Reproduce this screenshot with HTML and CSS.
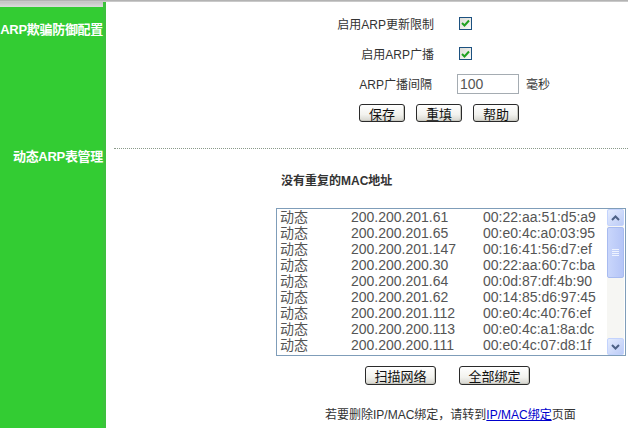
FILE: index.html
```html
<!DOCTYPE html>
<html>
<head>
<meta charset="utf-8">
<link rel="stylesheet" href="styles.css">
</head>
<body>
<div class="topline"></div>
<div class="page">
  <aside class="side">
    <div class="side-cap"></div>
    <div class="side-item first">ARP欺骗防御配置</div>
    <div class="side-item second">动态ARP表管理</div>
  </aside>
  <main class="main">
    <section class="cfg">
      <div class="row r1">
        <span class="lbl">启用ARP更新限制</span>
        <span class="ctl"><span class="chk"><svg width="9" height="8" viewBox="0 0 9 8"><path d="M1 4 L3.5 6.5 L8 1.5" fill="none" stroke="#21a121" stroke-width="2"/></svg></span></span>
      </div>
      <div class="row r2">
        <span class="lbl">启用ARP广播</span>
        <span class="ctl"><span class="chk"><svg width="9" height="8" viewBox="0 0 9 8"><path d="M1 4 L3.5 6.5 L8 1.5" fill="none" stroke="#21a121" stroke-width="2"/></svg></span></span>
      </div>
      <div class="row r3">
        <span class="lbl">ARP广播间隔</span>
        <span class="ctl"><span class="inp">100</span><span class="unit">毫秒</span></span>
      </div>
      <div class="btns top-btns">
        <span class="btn">保存</span>
        <span class="btn">重填</span>
        <span class="btn">帮助</span>
      </div>
    </section>
    <div class="dots"></div>
    <section class="arp">
      <div class="title">没有重复的MAC地址</div>
      <div class="list">
        <div class="rows">
          <div class="it"><span class="c1">动态</span><span class="c2">200.200.201.61</span><span class="c3">00:22:aa:51:d5:a9</span></div>
          <div class="it"><span class="c1">动态</span><span class="c2">200.200.201.65</span><span class="c3">00:e0:4c:a0:03:95</span></div>
          <div class="it"><span class="c1">动态</span><span class="c2">200.200.201.147</span><span class="c3">00:16:41:56:d7:ef</span></div>
          <div class="it"><span class="c1">动态</span><span class="c2">200.200.200.30</span><span class="c3">00:22:aa:60:7c:ba</span></div>
          <div class="it"><span class="c1">动态</span><span class="c2">200.200.201.64</span><span class="c3">00:0d:87:df:4b:90</span></div>
          <div class="it"><span class="c1">动态</span><span class="c2">200.200.201.62</span><span class="c3">00:14:85:d6:97:45</span></div>
          <div class="it"><span class="c1">动态</span><span class="c2">200.200.201.112</span><span class="c3">00:e0:4c:40:76:ef</span></div>
          <div class="it"><span class="c1">动态</span><span class="c2">200.200.200.113</span><span class="c3">00:e0:4c:a1:8a:dc</span></div>
          <div class="it"><span class="c1">动态</span><span class="c2">200.200.200.111</span><span class="c3">00:e0:4c:07:d8:1f</span></div>
        </div>
        <div class="sb">
          <div class="sbtn"><svg width="9" height="6" viewBox="0 0 9 6"><path d="M1 5 L4.5 1.5 L8 5" fill="none" stroke="#4d6185" stroke-width="2"/></svg></div>
          <div class="thumb"><span></span><span></span><span></span><span></span></div>
          <div class="track"></div>
          <div class="sbtn"><svg width="9" height="6" viewBox="0 0 9 6"><path d="M1 1 L4.5 4.5 L8 1" fill="none" stroke="#4d6185" stroke-width="2"/></svg></div>
        </div>
      </div>
      <div class="btns low-btns">
        <span class="btn wide">扫描网络</span>
        <span class="btn wide">全部绑定</span>
      </div>
      <p class="note">若要删除IP/MAC绑定，请转到<a href="#" class="link">IP/MAC绑定</a>页面</p>
    </section>
  </main>
</div>
</body>
</html>
```
FILE: styles.css
```css
html, body {
  margin: 0;
  padding: 0;
  background: #fff;
  height: 428px;
  overflow: hidden;
}
body {
  font-family: "Liberation Sans", "Noto Sans CJK SC", sans-serif;
  font-size: 12px;
  color: #222;
}
.topline {
  height: 2px;
  background: linear-gradient(#a8a8a8, #d4d4d4);
}
.page {
  display: flex;
  height: 426px;
}
.side {
  width: 103px;
  background: #33cc33;
  border-right: 3px solid #3cc23c;
  display: flex;
  flex-direction: column;
  align-items: flex-end;
}
.side-cap {
  align-self: stretch;
  height: 5px;
  background: linear-gradient(#c4c4c4, #dcdcdc);
}
.side-item {
  color: #fff;
  font-weight: bold;
  font-size: 13px;
  line-height: 16px;
  letter-spacing: -0.3px;
  white-space: nowrap;
}
.side-item.first { margin-top: 15px; }
.side-item.second { margin-top: 111px; }

.main {
  flex: 1;
  display: flex;
  flex-direction: column;
}
.cfg {
  padding-top: 6px;
}
.row {
  display: grid;
  grid-template-columns: 328px 1fr;
  column-gap: 25px;
  align-items: center;
}
.r1 { height: 30px; }
.r2 { height: 31px; }
.r3 { height: 29px; }
.lbl {
  text-align: right;
  color: #333;
}
.r3 .lbl { padding-right: 2px; }
.ctl {
  display: flex;
  align-items: center;
}
.chk {
  width: 11px;
  height: 11px;
  border: 1px solid #1c5180;
  background: linear-gradient(135deg, #dcdcd7, #fafaf8);
  display: flex;
  align-items: center;
  justify-content: center;
}
.inp {
  box-sizing: border-box;
  width: 62px;
  height: 20px;
  border: 1px solid #a5acb2;
  font-size: 14px;
  line-height: 18px;
  padding-left: 2px;
  color: #555;
  margin-left: -2px;
}
.unit {
  margin-left: 7px;
  color: #333;
}
.btns {
  display: flex;
}
.top-btns {
  margin-top: 6px;
  padding-left: 253px;
  gap: 11px;
}
.btn {
  box-sizing: border-box;
  width: 46px;
  height: 18px;
  border: 1px solid #2a2a2a;
  border-radius: 3px;
  background: linear-gradient(#ffffff, #f2f2ee 60%, #d6d5ce);
  display: flex;
  align-items: center;
  justify-content: center;
  font-size: 13px;
  color: #111;
  box-shadow: inset -1px -1px 0 #c8c8c0;
}
.dots {
  margin: 26px 0 0 8px;
  border-top: 1px dotted #8a9a8a;
}
.arp {
  padding-left: 170px;
}
.title {
  margin: 26px 0 0 5px;
  font-weight: bold;
  color: #333;
  line-height: 12px;
}
.list {
  margin-top: 21px;
  box-sizing: border-box;
  width: 350px;
  height: 148px;
  border: 1px solid #7f9db9;
  display: flex;
}
.rows {
  flex: 1;
  padding-left: 3px;
  overflow: hidden;
}
.it {
  height: 16px;
  line-height: 16px;
  font-size: 14px;
  color: #555;
  white-space: nowrap;
  display: flex;
}
.c1 { width: 71px; }
.c2 { width: 132px; }
.sb {
  width: 17px;
  margin-right: 1px;
  display: flex;
  flex-direction: column;
  background: #f6f6f3;
}
.sbtn {
  height: 17px;
  box-sizing: border-box;
  border: 1px solid #c3d3fd;
  border-radius: 2px;
  background: linear-gradient(135deg, #e4ecfe, #bccbf6);
  display: flex;
  align-items: center;
  justify-content: center;
}
.thumb {
  margin-top: 1px;
  height: 51px;
  box-sizing: border-box;
  border: 1px solid #a8bbf0;
  border-radius: 2px;
  background: linear-gradient(90deg, #c9d6fb, #b5c5f7);
  display: flex;
  flex-direction: column;
  align-items: center;
  justify-content: center;
  gap: 1px;
}
.thumb span {
  width: 7px;
  height: 1px;
  background: #eef3ff;
}
.track { flex: 1; }
.low-btns {
  margin-top: 10px;
  padding-left: 89px;
  gap: 23px;
}
.btn.wide {
  width: 71px;
  height: 19px;
}
.note {
  margin: 23px 0 0 49px;
  color: #333;
  line-height: 14px;
}
.link {
  color: #0000cc;
  text-decoration: underline;
}
```
